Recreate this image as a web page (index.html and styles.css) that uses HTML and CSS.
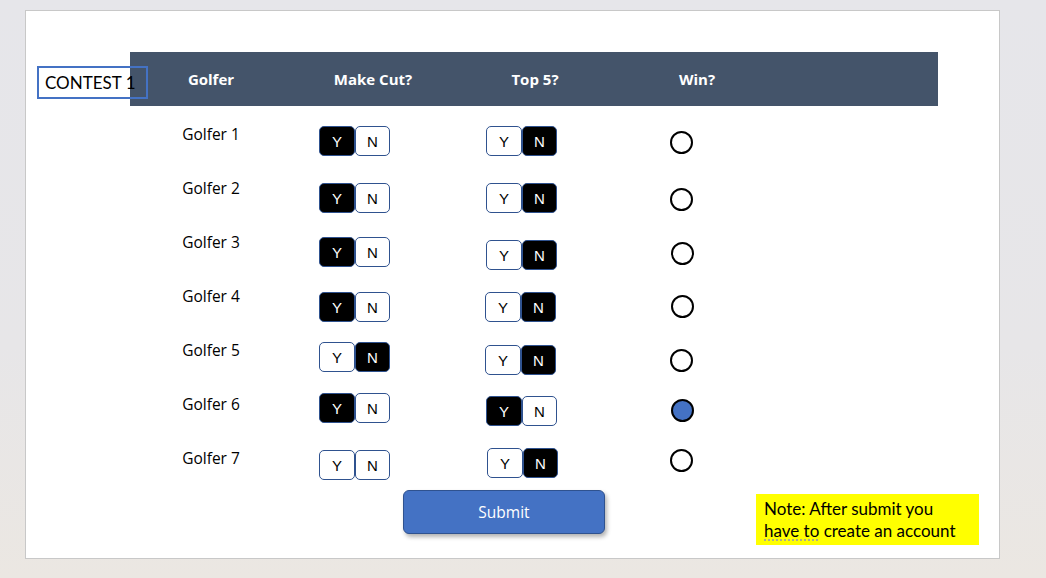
FILE: index.html
```html
<!DOCTYPE html>
<html>
<head>
<meta charset="utf-8">
<link rel="stylesheet" href="styles.css">
</head>
<body>
<div class="slide">
  <div class="contest">CONTEST 1</div>
  <div class="header">
    <div class="hcell">Golfer</div>
    <div class="hcell">Make Cut?</div>
    <div class="hcell">Top 5?</div>
    <div class="hcell">Win?</div>
  </div>
  <div class="rows">
    <div class="row">
      <div class="name">Golfer 1</div>
      <div class="cell cut"><div class="tog"><span class="on">Y</span><span>N</span></div></div>
      <div class="cell top5"><div class="tog"><span>Y</span><span class="on">N</span></div></div>
      <div class="cell win"><span class="radio"></span></div>
    </div>
    <div class="row">
      <div class="name">Golfer 2</div>
      <div class="cell cut"><div class="tog"><span class="on">Y</span><span>N</span></div></div>
      <div class="cell top5"><div class="tog"><span>Y</span><span class="on">N</span></div></div>
      <div class="cell win"><span class="radio"></span></div>
    </div>
    <div class="row">
      <div class="name">Golfer 3</div>
      <div class="cell cut"><div class="tog"><span class="on">Y</span><span>N</span></div></div>
      <div class="cell top5"><div class="tog"><span>Y</span><span class="on">N</span></div></div>
      <div class="cell win"><span class="radio"></span></div>
    </div>
    <div class="row">
      <div class="name">Golfer 4</div>
      <div class="cell cut"><div class="tog"><span class="on">Y</span><span>N</span></div></div>
      <div class="cell top5"><div class="tog"><span>Y</span><span class="on">N</span></div></div>
      <div class="cell win"><span class="radio"></span></div>
    </div>
    <div class="row">
      <div class="name">Golfer 5</div>
      <div class="cell cut"><div class="tog"><span>Y</span><span class="on">N</span></div></div>
      <div class="cell top5"><div class="tog"><span>Y</span><span class="on">N</span></div></div>
      <div class="cell win"><span class="radio"></span></div>
    </div>
    <div class="row">
      <div class="name">Golfer 6</div>
      <div class="cell cut"><div class="tog"><span class="on">Y</span><span>N</span></div></div>
      <div class="cell top5"><div class="tog"><span class="on">Y</span><span>N</span></div></div>
      <div class="cell win"><span class="radio checked"></span></div>
    </div>
    <div class="row">
      <div class="name">Golfer 7</div>
      <div class="cell cut"><div class="tog"><span>Y</span><span>N</span></div></div>
      <div class="cell top5"><div class="tog"><span>Y</span><span class="on">N</span></div></div>
      <div class="cell win"><span class="radio"></span></div>
    </div>
  </div>
  <div class="footer">
    <button class="submit">Submit</button>
    <div class="note">Note: After submit you<br><span class="spell">have to</span> create an account</div>
  </div>
</div>
</body>
</html>
```
FILE: styles.css
```css
html, body {
  margin: 0;
  padding: 0;
}
body {
  width: 1046px;
  height: 578px;
  overflow: hidden;
  background: linear-gradient(180deg, #e6e6ea 0%, #e7e6e8 60%, #ebe7e2 100%);
  font-family: "Open Sans", "Noto Sans", sans-serif;
  color: #000;
}
.slide {
  position: relative;
  box-sizing: border-box;
  margin: 10px 0 0 25px;
  width: 975px;
  height: 549px;
  background: #fff;
  border: 1px solid #c8c8c8;
  padding-top: 41px;
}
.contest {
  position: absolute;
  left: 11px;
  top: 55px;
  box-sizing: border-box;
  width: 111px;
  height: 33px;
  border: 2px solid #4472c4;
  padding-left: 6px;
  font-family: Lato, "Liberation Sans", sans-serif;
  font-size: 17px;
  line-height: 29px;
  z-index: 2;
  white-space: nowrap;
}
.header {
  margin-left: 104px;
  width: 808px;
  height: 54px;
  background: #44546a;
  display: flex;
  align-items: center;
}
.hcell {
  width: 162px;
  text-align: center;
  color: #fff;
  font-weight: 700;
  font-size: 15px;
  line-height: 20px;
}
.rows {
  margin-left: 104px;
  margin-top: 18px;
}
.row {
  display: grid;
  grid-template-columns: 162px 125px 209px 110px;
  align-items: start;
  height: 54px;
}
.row:last-child {
  height: 42px;
}
.name {
  text-align: center;
  font-size: 15.5px;
  line-height: 20px;
}
.cell {
  display: flex;
  justify-content: center;
}
.tog {
  display: flex;
}
.tog span {
  box-sizing: border-box;
  width: 36px;
  height: 30px;
  border: 1px solid #2f528f;
  border-radius: 5px;
  background: #fff;
  color: #000;
  font-family: "Liberation Sans", Arial, sans-serif;
  font-size: 15px;
  line-height: 29px;
  text-align: center;
}
.tog span + span {
  width: 35px;
}
.tog span.on {
  background: #000;
  color: #fff;
}
.radio {
  box-sizing: border-box;
  display: block;
  width: 23px;
  height: 23px;
  border: 2px solid #000;
  border-radius: 50%;
  background: #fff;
}
.radio.checked {
  background: #4472c4;
}

.row:nth-child(1) .cut .tog { margin-top: 2px; }
.row:nth-child(1) .top5 .tog { margin-top: 2px; }
.row:nth-child(1) .radio { margin-top: 7px; }
.row:nth-child(2) .cut .tog { margin-top: 5px; }
.row:nth-child(2) .top5 .tog { margin-top: 5px; }
.row:nth-child(2) .radio { margin-top: 10px; }
.row:nth-child(3) .cut .tog { margin-top: 5px; }
.row:nth-child(3) .top5 .tog { margin-top: 8px; }
.row:nth-child(3) .radio { margin-top: 10px; margin-left: 2px; }
.row:nth-child(4) .cut .tog { margin-top: 6px; }
.row:nth-child(4) .top5 .tog { margin-top: 6px; margin-left: -2px; }
.row:nth-child(4) .radio { margin-top: 9px; margin-left: 2px; }
.row:nth-child(5) .cut .tog { margin-top: 2px; }
.row:nth-child(5) .top5 .tog { margin-top: 5px; margin-left: -2px; }
.row:nth-child(5) .radio { margin-top: 9px; }
.row:nth-child(6) .cut .tog { margin-top: -1px; }
.row:nth-child(6) .top5 .tog { margin-top: 2px; }
.row:nth-child(6) .radio { margin-top: 5px; margin-left: 2px; }
.row:nth-child(7) .cut .tog { margin-top: 2px; }
.row:nth-child(7) .top5 .tog { margin-top: 0; margin-left: 2px; }
.row:nth-child(7) .radio { margin-top: 1px; }

.footer {
  display: flex;
  align-items: flex-start;
}
.submit {
  margin-left: 377px;
  width: 202px;
  height: 44px;
  background: #4472c4;
  border: 1px solid #2f528f;
  border-radius: 6px;
  box-shadow: 2px 3px 4px rgba(0, 0, 0, 0.3);
  color: #fff;
  font-family: "Open Sans", "Noto Sans", sans-serif;
  font-size: 15.5px;
  padding: 0;
}
.note {
  margin-left: 151px;
  margin-top: 4px;
  box-sizing: border-box;
  width: 223px;
  height: 51px;
  background: #ffff00;
  padding: 4px 0 0 8px;
  font-family: Lato, "Liberation Sans", sans-serif;
  font-size: 17px;
  line-height: 22px;
  white-space: nowrap;
}
.spell {
  text-decoration: underline dotted #a0a0a0;
  text-underline-offset: 3px;
}
```
